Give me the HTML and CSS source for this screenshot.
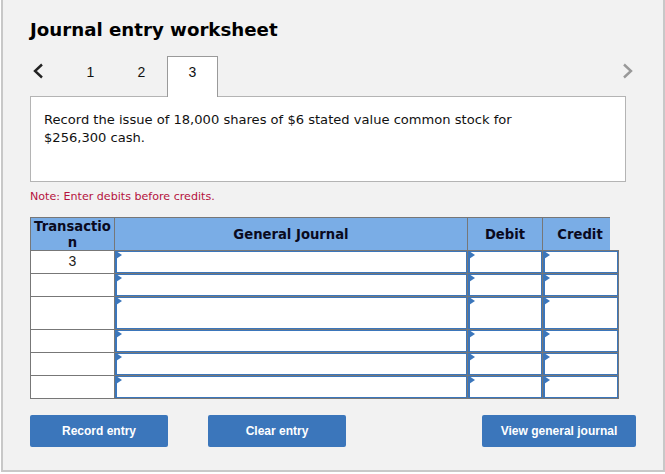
FILE: index.html
```html
<!DOCTYPE html>
<html lang="en">
<head>
<meta charset="utf-8">
<title>Journal entry worksheet</title>
<link rel="stylesheet" href="styles.css">
</head>
<body>
<main class="panel">
  <h1 class="title">Journal entry worksheet</h1>
  <nav class="tabs">
    <svg class="chev" width="12" height="16" viewBox="0 0 12 16"><path d="M10 1.5 L3 8 L10 14.5" fill="none" stroke="#222" stroke-width="2.4"/></svg>
    <span class="tab">1</span>
    <span class="tab">2</span>
    <span class="tab active">3</span>
    <svg class="chev next" width="12" height="16" viewBox="0 0 12 16"><path d="M2 1.5 L9 8 L2 14.5" fill="none" stroke="#999" stroke-width="2.4"/></svg>
  </nav>
  <section class="prompt">Record the issue of 18,000 shares of $6 stated value common stock for $256,300 cash.</section>
  <p class="note">Note: Enter debits before credits.</p>
  <div class="journal">
    <div class="head">
      <div class="hcell">Transactio<br>n</div>
      <div class="hcell">General Journal</div>
      <div class="hcell">Debit</div>
      <div class="hcell credit">Credit</div>
    </div>
    <div class="row"><div class="tx">3</div><div class="in"></div><div class="in"></div><div class="in"></div></div>
    <div class="row"><div class="tx"></div><div class="in"></div><div class="in"></div><div class="in"></div></div>
    <div class="row tall"><div class="tx"></div><div class="in"></div><div class="in"></div><div class="in"></div></div>
    <div class="row"><div class="tx"></div><div class="in"></div><div class="in"></div><div class="in"></div></div>
    <div class="row"><div class="tx"></div><div class="in"></div><div class="in"></div><div class="in"></div></div>
    <div class="row last"><div class="tx"></div><div class="in"></div><div class="in"></div><div class="in"></div></div>
  </div>
  <div class="actions">
    <button class="btn small">Record entry</button>
    <button class="btn small">Clear entry</button>
    <button class="btn wide">View general journal</button>
  </div>
</main>
</body>
</html>
```
FILE: styles.css
```css
* { box-sizing: border-box; }
html, body { margin: 0; padding: 0; background: #fff; }
body { width: 665px; height: 474px; overflow: hidden; font-family: "DejaVu Sans", Verdana, sans-serif; }
.panel {
  margin: -2px 0 0 1px;
  width: 664px;
  height: 474px;
  background: #f2f2f2;
  border: 2px solid #c8c8c8;
  padding: 18px 27px 0 27px;
  color: #000;
}
.title { margin: 0; font-size: 18.2px; line-height: 24px; font-weight: 700; height: 24px; }
.tabs { display: flex; align-items: flex-end; height: 42px; margin-top: 12px; position: relative; }
.chev { position: absolute; left: 2px; top: 9px; }
.chev.next { left: 592px; }
.tab {
  width: 51px; height: 41px; margin-bottom: -1px;
  display: flex; align-items: center; justify-content: center;
  font-family: "Liberation Sans", Arial, sans-serif; font-size: 14px; color: #111;
  padding-bottom: 10px;
}
.tab:first-of-type { margin-left: 35px; }
.tab.active { background: #fff; border: 1px solid #9a9a9a; border-bottom: 0; position: relative; z-index: 1; }
.prompt {
  width: 596px; height: 86px; background: #fff; border: 1px solid #b4b4b4;
  padding: 14px 100px 0 13px; font-size: 13.08px; line-height: 18px; color: #111;
}
.note { margin: 0; height: 35px; padding-top: 8px; font-size: 11.1px; line-height: 14px; color: #b5123e; }
.journal { width: 589px; }
.head { display: grid; grid-template-columns: 84px 353px 75px 68px; width: 580px; }
.hcell {
  height: 33px; background: #7aade6; border-top: 1px solid #777; border-left: 1px solid #777;
  display: flex; align-items: center; justify-content: center; text-align: center;
  font-size: 13.2px; line-height: 16px; font-weight: 700; color: #0a0a1e; padding-top: 2px;
}
.hcell.credit { padding-left: 7px; }
.row { display: grid; grid-template-columns: 84px 353px 75px 77px; height: 23px; border-top: 1px solid #777; }
.row.tall { height: 33px; }
.row.last { height: 24px; border-bottom: 1px solid #777; }
.tx {
  background: #fff; border-left: 1px solid #777;
  text-align: center; font-family: "Liberation Sans", Arial, sans-serif; font-size: 14px; line-height: 20px; color: #222;
}
.in {
  position: relative; background: #fff; margin-left: 1px;
  border: solid #3b76bb; border-width: 1px 1px 1px 2px;
  box-shadow: -1px 0 0 #777;
}
.in:last-child { margin-right: 1px; box-shadow: -1px 0 0 #777, 1px 0 0 #777; }
.in::before {
  content: ""; position: absolute; left: -1px; top: -1px;
  border-left: 6px solid #3b76bb; border-top: 4px solid transparent; border-bottom: 4px solid transparent;
}
.actions { display: flex; margin-top: 16px; width: 606px; }
.btn {
  height: 32px; border: 0; border-radius: 2px; background: #3b76bb; color: #fff;
  font-family: "Liberation Sans", Arial, sans-serif; font-size: 12px; font-weight: 700; padding: 0;
}
.btn.small { width: 138px; margin-right: 40px; }
.btn.wide { width: 154px; margin-left: auto; margin-right: 0; }
```
